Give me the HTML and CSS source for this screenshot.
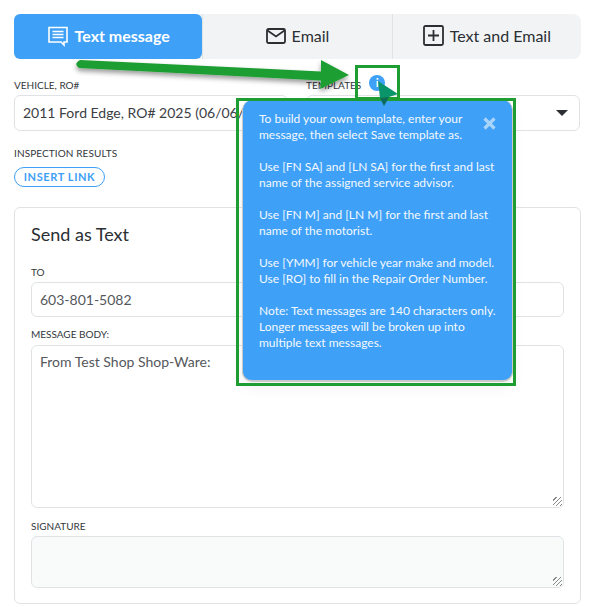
FILE: index.html
```html
<!DOCTYPE html>
<html lang="en">
<head>
<meta charset="UTF-8">
<meta name="viewport" content="width=device-width, initial-scale=1.0">
<title>Send message</title>
<link rel="stylesheet" href="styles.css">
</head>
<body>
    <div class="page">
        <div class="tabs">
            <div class="tab active">
                <svg class="tab-icon" width="22" height="22" viewBox="0 0 22 22" fill="none" stroke="#fff" stroke-width="1.6">
                    <path d="M2 2.500h18v14.500h-3v3l-3-3H2z"/>
                    <path d="M5.500 6.500h11M5.500 9.500h11M5.500 12.500h11"/>
                </svg>
                Text message
            </div>
            <div class="tab">
                <svg class="tab-icon" width="20" height="16" viewBox="0 0 20 16" fill="none" stroke="#2b2f33" stroke-width="1.8">
                    <rect x="1" y="1" width="18" height="14" rx="1.500"/>
                    <path d="M1.500 2.500l8.500 6 8.500-6"/>
                </svg>
                Email
            </div>
            <div class="tab">
                <svg class="tab-icon" width="21" height="21" viewBox="0 0 21 21" fill="none" stroke="#2b2f33" stroke-width="1.8">
                    <rect x="1" y="1" width="19" height="19" rx="1.500"/>
                    <path d="M10.500 5v11M5 10.500h11"/>
                </svg>
                Text and Email
            </div>
        </div>

        <div class="selects">
            <div class="field">
                <div class="label">VEHICLE, RO#</div>
                <div class="select">2011 Ford Edge, RO# 2025 (06/06/2</div>
            </div>
            <div class="field">
                <div class="label label-row">TEMPLATES <span class="info">i</span></div>
                <div class="select"><span class="caret"></span></div>
            </div>
        </div>

        <div class="label inspection">INSPECTION RESULTS</div>
        <div class="pill">INSERT LINK</div>

        <div class="card">
            <h2>Send as Text</h2>
            <div class="label">TO</div>
            <div class="input phone">603-801-5082</div>
            <div class="label">MESSAGE BODY:</div>
            <div class="input area body-area">From Test Shop Shop-Ware:<span class="grip"></span></div>
            <div class="label">SIGNATURE</div>
            <div class="input area signature"><span class="grip"></span></div>
        </div>
    </div>

    <!-- help popup opened from the templates icon -->
    <div class="popup">
        <svg class="close" width="13" height="13" viewBox="0 0 13 13" stroke="#a9d4fa" stroke-width="3.200">
            <path d="M1.500 1.500l10 10M11.500 1.500l-10 10"/>
        </svg>
        <p>To build your own template, enter your<br>message, then select Save template as.</p>
        <p>Use [FN SA] and [LN SA] for the first and last<br>name of the assigned service advisor.</p>
        <p>Use [FN M] and [LN M] for the first and last<br>name of the motorist.</p>
        <p>Use [YMM] for vehicle year make and model.<br>Use [RO] to fill in the Repair Order Number.</p>
        <p>Note: Text messages are 140 characters only.<br>Longer messages will be broken up into<br>multiple text messages.</p>
    </div>

    <!-- green annotations drawn on top of the screenshot -->
    <div class="mark mark-popup"></div>
    <div class="mark mark-icon"></div>
    <svg class="arrows" width="591" height="607" viewBox="0 0 591 607">
        <defs>
            <filter id="soft" x="-10%" y="-50%" width="120%" height="220%">
                <feDropShadow dx="0" dy="3" stdDeviation="2.500" flood-color="#000" flood-opacity="0.4"/>
            </filter>
        </defs>
        <path d="M80 60L321 71.500L321 60L349 75L320 89L321 80.500L79 68Q73 64 80 60z" fill="#1e9e32" filter="url(#soft)"/>
        <path d="M378 81L398 94L389 97L380 98z" fill="#0a9469"/>
        <path d="M380 98L389 97L384 106z" fill="#0d6b5a"/>
    </svg>
</body>
</html>
```

FILE: styles.css
```css
body {
    font-family: Lato, "Open Sans", sans-serif;
    background-color: #fff;
    color: #2b2f33;
    margin: 0;
    padding: 0;
}
.page {
    padding: 14px 10px 3px 14px;
}
.tabs {
    display: flex;
    height: 45px;
    background-color: #f2f3f5;
    border-radius: 8px;
}
.tab {
    flex: 1;
    display: flex;
    align-items: center;
    justify-content: center;
    gap: 6px;
    padding-bottom: 2px;
    font-size: 16px;
    border-left: 1px solid #dfe3e6;
}
.tab:first-child {
    border-left: 0;
}
.tab.active {
    background-color: #3ea0f6;
    color: #fff;
    font-weight: 700;
    border-radius: 6px;
}
.selects {
    display: flex;
    gap: 18px;
    margin: 20px 1px 0 0;
}
.field {
    flex: 1;
}
.label {
    font-size: 10px;
    line-height: 12px;
    color: #33373b;
    height: 12px;
}
.label-row {
    display: flex;
    align-items: center;
    gap: 8px;
}
.select {
    height: 34px;
    margin-top: 4px;
    padding: 0 8px;
    line-height: 34px;
    font-size: 14px;
    color: #3c4044;
    border: 1px solid #dfe3e6;
    border-radius: 6px;
    position: relative;
    white-space: nowrap;
    overflow: hidden;
}
.info {
    flex: none;
    width: 16px;
    height: 16px;
    margin-bottom: 5px;
    border-radius: 50%;
    background-color: #3ea0f6;
    color: #fff;
    font-size: 12px;
    font-weight: 700;
    line-height: 16px;
    text-align: center;
}
.caret {
    position: absolute;
    right: 11px;
    top: 14px;
    border-left: 6px solid transparent;
    border-right: 6px solid transparent;
    border-top: 6px solid #2b2f33;
}
.inspection {
    margin-top: 16px;
    letter-spacing: 0.1px;
}
.pill {
    width: 89px;
    height: 18px;
    margin-top: 8px;
    border: 1px solid #3ea0f6;
    border-radius: 10px;
    color: #3ea0f6;
    font-size: 11px;
    font-weight: 700;
    letter-spacing: 0.6px;
    line-height: 18px;
    text-align: center;
}
.card {
    margin-top: 20px;
    height: 365px;
    padding: 14px 16px 16px;
    border: 1px solid #dfe3e6;
    border-radius: 6px;
}
h2 {
    margin: 0 0 20px;
    height: 24px;
    font-size: 18px;
    font-weight: 400;
    line-height: 24px;
}
.input {
    margin-top: 4px;
    padding: 0 8px;
    font-size: 14px;
    color: #54585c;
    border: 1px solid #dfe3e6;
    border-radius: 6px;
    position: relative;
}
.phone {
    height: 33px;
    line-height: 33px;
    margin-bottom: 11px;
}
.area {
    padding-top: 7px;
    line-height: 18px;
}
.body-area {
    height: 154px;
    margin-top: 5px;
    margin-bottom: 12px;
}
.signature {
    height: 43px;
    background-color: #f9fafa;
}
.grip {
    position: absolute;
    right: 1px;
    bottom: 1px;
    width: 9px;
    height: 9px;
    background: repeating-linear-gradient(135deg, transparent 0 2px, #8a8a8a 2px 3px);
}
.popup {
    position: absolute;
    left: 242px;
    top: 100px;
    width: 236px;
    height: 269px;
    padding: 11px 17px 0 16px;
    background-color: #3ea0f6;
    border: 1px solid #c9c9c9;
    border-width: 0 1px 2px 1px;
    border-radius: 10px;
    box-shadow: 0 6px 14px rgba(0, 0, 0, 0.06);
    color: #f4f9fe;
    font-size: 12px;
    line-height: 16px;
    white-space: nowrap;
}
.popup p {
    margin: 0 0 16px;
}
.close {
    position: absolute;
    right: 16px;
    top: 17px;
}
.mark {
    position: absolute;
    box-sizing: border-box;
    border: 3px solid #1e9e32;
}
.mark-popup {
    left: 236px;
    top: 98px;
    width: 280px;
    height: 288px;
}
.mark-icon {
    left: 355px;
    top: 65px;
    width: 45px;
    height: 35px;
}
.arrows {
    position: absolute;
    left: 0;
    top: 0;
}
```
